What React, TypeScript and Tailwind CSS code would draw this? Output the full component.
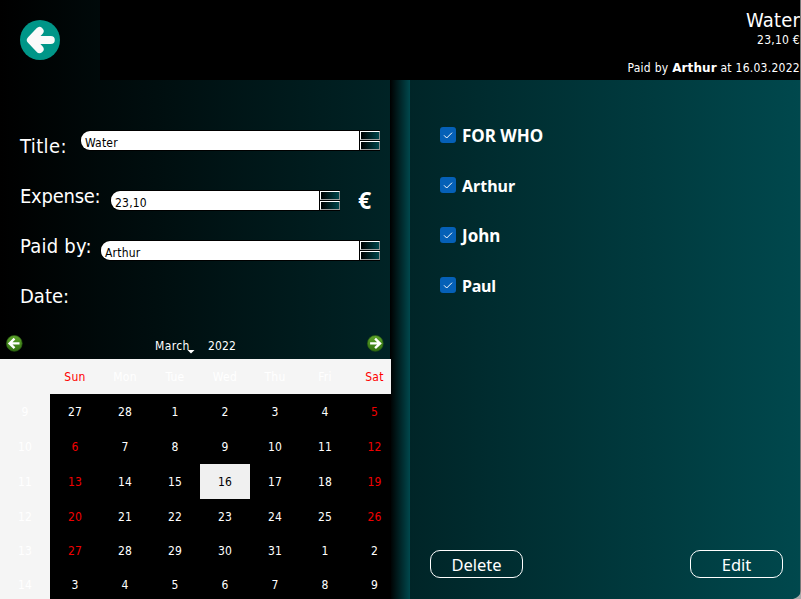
import React from "react";

const tahoma = "font-['DejaVu_Sans_Condensed','DejaVu_Sans',sans-serif] [font-stretch:condensed]";
const segoe = "font-['Noto_Sans',sans-serif]";

function SpinButton() {
  return (
    <div className="h-[9px] w-[20px] border border-t-white border-l-white border-r-[#8d8d8d] border-b-[#a0a0a0] bg-black">
      <div className="h-full w-full bg-linear-to-r/srgb from-black to-[#00454b]" />
    </div>
  );
}

function SpinField({ value, className }: { value: string; className: string }) {
  return (
    <div className={`flex h-[21px] rounded-l-[10px] border-y border-l border-black ${className}`}>
      <div className="flex-1 rounded-l-[9px] bg-white pl-1 text-[12px] leading-[24px] tracking-[0.2px] text-black">{value}</div>
      <div className="flex w-[21px] flex-col justify-between bg-black pl-px">
        <SpinButton />
        <SpinButton />
      </div>
    </div>
  );
}

function MonthArrow({ right = false }: { right?: boolean }) {
  return (
    <svg width="18" height="18" viewBox="0 0 18 18">
      <defs>
        <linearGradient id="leaf" x1="0" y1="0" x2="0" y2="1">
          <stop offset="0" stopColor="#5fa52c" />
          <stop offset="1" stopColor="#316f10" />
        </linearGradient>
      </defs>
      <circle cx="9.3" cy="9.4" r="7.9" fill="url(#leaf)" stroke="#285c12" strokeWidth="0.7" />
      <path
        d={right ? "M4.1 9.4H14.1M9.1 4.7L14 9.4L9.1 14.1" : "M14.5 9.4H4.5M9.5 4.7L4.6 9.4L9.5 14.1"}
        fill="none"
        stroke="white"
        strokeWidth="2.4"
      />
    </svg>
  );
}

function Check({ label, className = "" }: { label: string; className?: string }) {
  return (
    <label className="flex h-[50px] items-center gap-[6px]">
      <svg width="16" height="16" viewBox="0 0 16 16">
        <rect width="16" height="16" rx="3" fill="#0560b7" />
        <path d="M4 8.3L6.7 11L12 5.7" fill="none" stroke="white" strokeWidth="1" />
      </svg>
      <span className={`relative top-px font-bold leading-[22px] ${className}`}>{label}</span>
    </label>
  );
}

const weekdays = ["Sun", "Mon", "Tue", "Wed", "Thu", "Fri", "Sat"];
const weeks = [
  { no: 9, days: [27, 28, 1, 2, 3, 4, 5], red: [6] },
  { no: 10, days: [6, 7, 8, 9, 10, 11, 12], red: [0, 6] },
  { no: 11, days: [13, 14, 15, 16, 17, 18, 19], red: [0, 6] },
  { no: 12, days: [20, 21, 22, 23, 24, 25, 26], red: [0, 6] },
  { no: 13, days: [27, 28, 29, 30, 31, 1, 2], red: [0] },
  { no: 14, days: [3, 4, 5, 6, 7, 8, 9], red: [] as number[] },
];
const columns = "grid w-[399px] grid-cols-[50px_50px_50px_50px_50px_50px_50px_49px]";

function Calendar() {
  return (
    <div className="relative z-10 h-[240px] w-[391px] overflow-hidden bg-black text-center text-[12px] tracking-[0.1px]">
      <div className={`${columns} h-[35px] bg-[#f5f5f5] leading-[36px] tracking-[0.3px]`}>
        <span />
        {weekdays.map((d, i) => (
          <span key={d} className={i === 0 || i === 6 ? "text-[#ff0000]" : "text-white"}>{d}</span>
        ))}
      </div>
      {weeks.map((w, r) => (
        <div key={w.no} className={`${columns} ${r < 4 ? "h-[35px] leading-[36px]" : "h-[34px] leading-[34px]"}`}>
          <span className="bg-[#f5f5f5] text-white">{w.no}</span>
          {w.days.map((d, i) => (
            <span
              key={i}
              className={
                r === 2 && i === 3 ? "h-[35px] bg-[#f0f0f0] text-black" : w.red.includes(i) ? "text-[#f00000]" : "text-white"
              }
            >
              {d}
            </span>
          ))}
        </div>
      ))}
    </div>
  );
}

export default function App() {
  return (
    <div className={`relative h-[599px] w-[801px] overflow-hidden bg-linear-to-r/srgb from-black to-[#00484d] text-white ${tahoma}`}>
      <header className="flex h-[80px]">
        <div className="flex w-[100px] items-center pl-5">
          <svg width="40" height="40" viewBox="0 0 40 40">
            <circle cx="20" cy="20" r="20" fill="#009688" />
            <path d="M30.7 20H12M19.5 11.2L11 20L19.5 29" fill="none" stroke="#fafafa" strokeWidth="8.2" strokeLinecap="round" strokeLinejoin="round" />
          </svg>
        </div>
        <div className="flex flex-1 flex-col items-end bg-black pt-[7px] pr-px">
          <span className="text-[20px] leading-[26px] tracking-[0.2px]">Water</span>
          <span className="text-[12px] leading-[14px] tracking-[0.25px]">23,10 €</span>
          <span className="mt-[13px] text-[12px] leading-[16px] tracking-[0.27px]">
            Paid by <b className="font-['DejaVu_Sans',sans-serif] text-[12px] tracking-[0.1px] [font-stretch:normal]">Arthur</b> at 16.03.2022
          </span>
        </div>
      </header>

      <main className="flex h-[519px]">
        <section className="w-[390px] shrink-0 pt-[40px]">
          <div className="flex h-[50px] pl-5 text-[20px] leading-[52px]">
            <span className="w-[60px] tracking-[0.4px]">Title:</span>
            <SpinField value="Water" className="mt-[10px] w-[300px]" />
          </div>
          <div className="flex h-[50px] pl-5 text-[20px] leading-[52px]">
            <span className="w-[90px] tracking-[-0.25px]">Expense:</span>
            <SpinField value="23,10" className="mt-[20px] w-[230px]" />
            <b className={`mt-[4px] ml-[18px] text-[23px] ${segoe}`}>€</b>
          </div>
          <div className="flex h-[50px] pl-5 text-[20px] leading-[52px]">
            <span className="w-[80px] tracking-[0.25px]">Paid by:</span>
            <SpinField value="Arthur" className="mt-[20px] w-[280px]" />
          </div>
          <div className="h-[50px] pl-5 text-[20px] leading-[52px]">Date:</div>
          <div className="flex h-[39px] pt-[14px] pr-[6px] pl-[5px] text-[12px] leading-[24px]">
            <MonthArrow />
            <span className="ml-[132px] w-[36px] tracking-[0.35px]">March</span>
            <svg width="8" height="5" viewBox="0 0 8 5" className="mt-[15px] -ml-[4px]">
              <path d="M0.5 1H7.5L4 4.5Z" fill="white" />
            </svg>
            <span className="ml-[13px] flex-1 tracking-[0.1px]">2022</span>
            <MonthArrow right />
          </div>
          <Calendar />
        </section>
        <div className="w-[20px] shrink-0 bg-linear-to-r/srgb from-black to-[#00484d]" />
        <section className={`flex flex-1 flex-col justify-between pt-[30px] pb-[21px] ${segoe}`}>
          <div className="pl-[30px]">
            <Check label="FOR WHO" className="text-[17px]" />
            <Check label="Arthur" className="text-[16px]" />
            <Check label="John" className="text-[17px]" />
            <Check label="Paul" className="text-[16px] tracking-[-0.2px]" />
          </div>
          <div className="flex justify-between pr-[18px] pl-5 text-[16.5px]">
            <button className="h-[28px] w-[93px] rounded-[10px] border border-white leading-[27px]">Delete</button>
            <button className="h-[28px] w-[93px] rounded-[10px] border border-white leading-[27px]">Edit</button>
          </div>
        </section>
      </main>
      <svg className="absolute inset-0" width="801" height="599">
        <path d="M800.5 0V599" stroke="#777" />
        <path d="M0 591Q1 597 6 599H0Z" fill="#888" />
        <path d="M801 591Q800 597 793 599H801Z" fill="#aaa" />
      </svg>
    </div>
  );
}
